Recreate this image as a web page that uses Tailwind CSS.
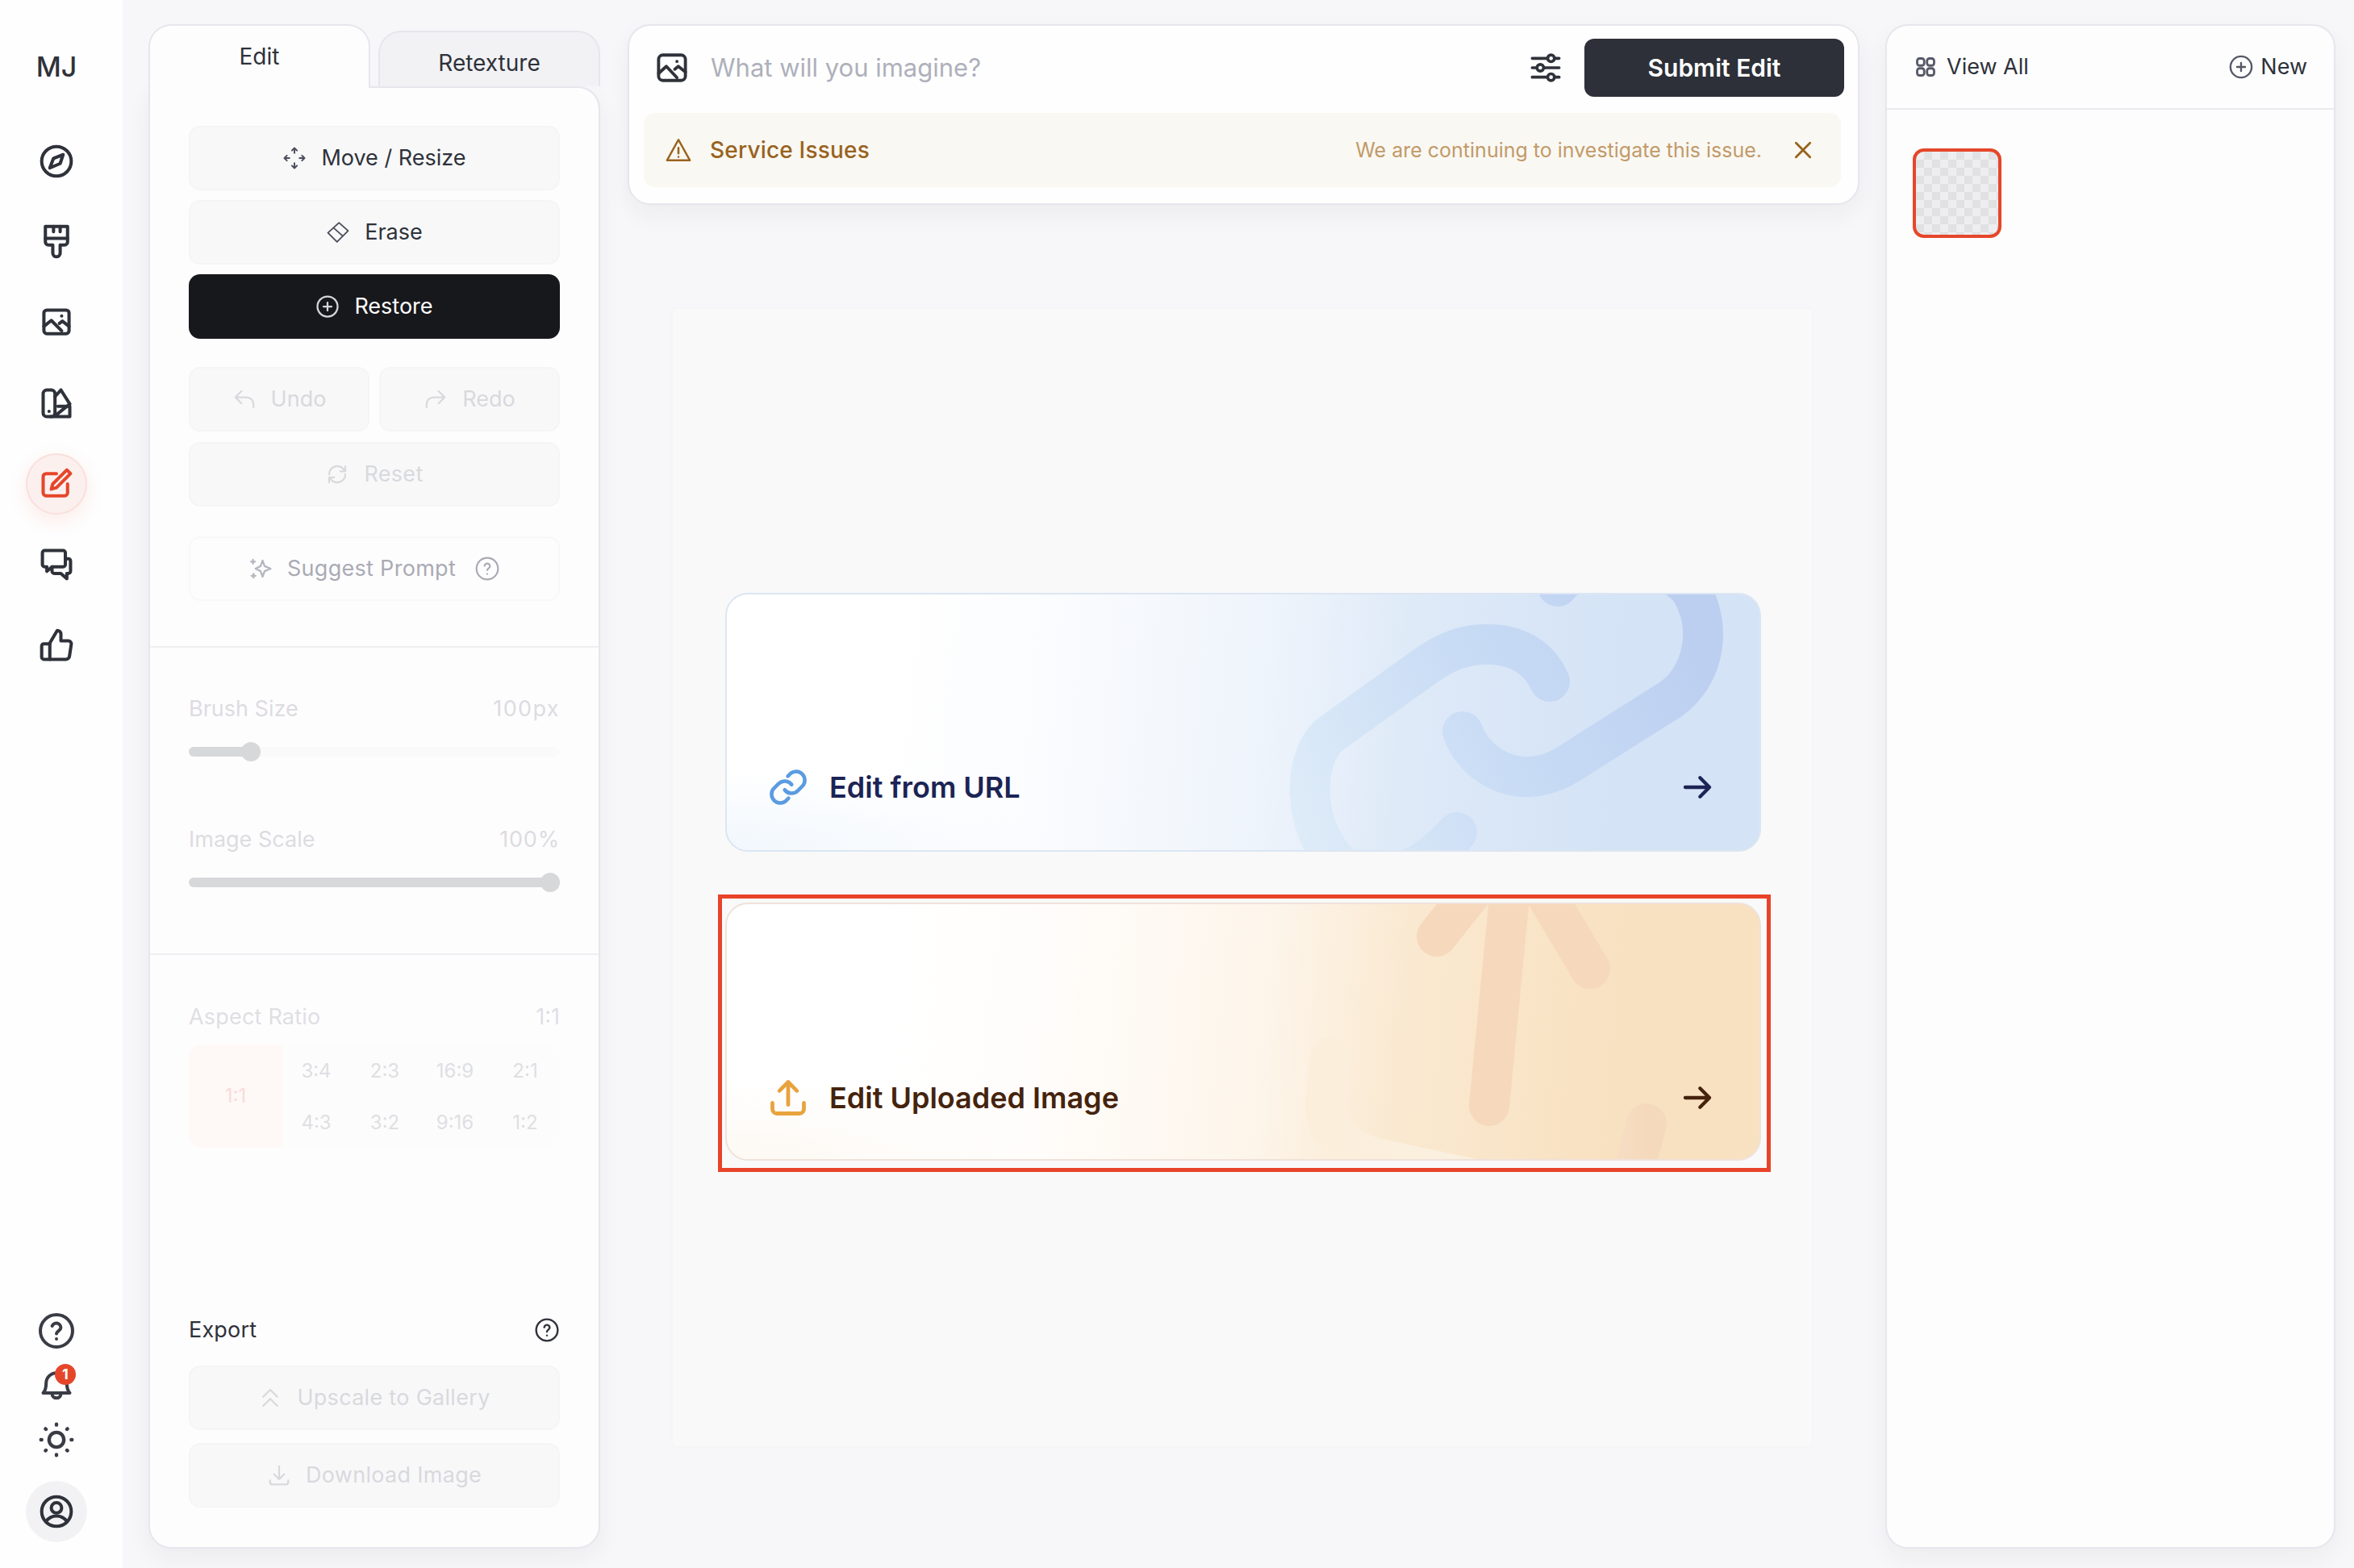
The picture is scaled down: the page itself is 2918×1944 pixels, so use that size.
<!DOCTYPE html>
<html lang="en">
<head>
  <meta charset="UTF-8">
  <title>Edit</title>
  <script src="https://cdn.jsdelivr.net/npm/@tailwindcss/browser@4"></script>
</head>
<body class="bg-[#f7f7f9] font-['Inter',sans-serif] text-[#2f323a] text-[27px] leading-[38px]">
  <div class="flex w-[2918px] h-[1944px] overflow-hidden">

    <!-- Icon rail -->
    <aside class="w-[152px] shrink-0 bg-[#fefefe] flex flex-col items-center pr-[12px]">
      <div class="mt-[63px] h-[40px] text-[34px] leading-[40px] font-medium text-[#2f323a]">MJ</div>
      <nav class="mt-[59px] flex flex-col items-center gap-[24px]">
        <a class="size-[76px] flex items-center justify-center rounded-full">
          <svg class="size-[44px]" viewBox="0 0 24 24" fill="none" stroke="currentColor" stroke-width="2.200" stroke-linejoin="round"><circle cx="12" cy="12" r="10"/><path d="M16.5 7.5l-2 6-7 3 2.500-6.500z"/></svg>
        </a>
        <a class="size-[76px] flex items-center justify-center rounded-full">
          <svg class="size-[44px]" viewBox="0 0 24 24" fill="none" stroke="currentColor" stroke-width="2.200" stroke-linejoin="round" stroke-linecap="round"><path d="M4.500 1.500h15v10.500a2 2 0 0 1-2 2h-3v5.500a2.500 2.500 0 0 1-5 0V14h-3a2 2 0 0 1-2-2z"/><path d="M4.500 9.500h15M10 1.500v3.500M14.500 1.500v3.500"/></svg>
        </a>
        <a class="size-[76px] flex items-center justify-center rounded-full">
          <svg class="size-[44px]" viewBox="0 0 24 24" fill="none" stroke="currentColor" stroke-width="2.200" stroke-linejoin="round" stroke-linecap="round"><rect x="3.500" y="3.500" width="17" height="16" rx="2"/><path d="M3.500 14.500l5-4 7 7M14 12.500l2-1.500 4.500 3.500M15.500 7.500h.01"/></svg>
        </a>
        <a class="size-[76px] flex items-center justify-center rounded-full">
          <svg class="size-[44px]" viewBox="0 0 24 24" fill="none" stroke="currentColor" stroke-width="2.200" stroke-linejoin="round" stroke-linecap="round"><rect x="3" y="3" width="8" height="18" rx="2.500"/><path d="M11 7.500L15 3l6 9.500-10 8M13 14h8v7H8"/><path d="M7 17.500h.01"/></svg>
        </a>
        <a class="size-[76px] flex items-center justify-center rounded-full bg-[#fcf0ef] border-2 border-[#fadfdb] text-[#e5462a] shadow-[0_8px_24px_rgba(229,70,42,0.1)]">
          <svg class="size-[44px]" viewBox="0 0 24 24" fill="none" stroke="currentColor" stroke-width="2.200" stroke-linejoin="round" stroke-linecap="round"><path d="M12 5H5a2 2 0 0 0-2 2v11a2 2 0 0 0 2 2h12.500a2 2 0 0 0 2-2v-6"/><path d="M19 2.500l2.500 2.500L12 14.500l-3.500 1 1-3.500z"/></svg>
        </a>
        <a class="size-[76px] flex items-center justify-center rounded-full">
          <svg class="size-[44px]" viewBox="0 0 24 24" fill="none" stroke="currentColor" stroke-width="2.200" stroke-linejoin="round" stroke-linecap="round"><path d="M4 2.500h12.500a1.500 1.500 0 0 1 1.500 1.500v8a1.500 1.500 0 0 1-1.500 1.500H9l-3.500 3v-3H4A1.500 1.500 0 0 1 2.500 12V4A1.500 1.500 0 0 1 4 2.500z"/><path d="M18 8h2a1.500 1.500 0 0 1 1.500 1.500v7A1.500 1.500 0 0 1 20 18h-1v3.500L15 18h-4.500A1.500 1.500 0 0 1 9 16.500v-3"/></svg>
        </a>
        <a class="size-[76px] flex items-center justify-center rounded-full">
          <svg class="size-[44px]" viewBox="0 0 24 24" fill="none" stroke="currentColor" stroke-width="2.200" stroke-linejoin="round" stroke-linecap="round"><path d="M7.500 21.500V10.500L12.500 2c1.500 0 2.500 1 2.500 2.500V9h5a2 2 0 0 1 2 2.300l-1.200 8A2.500 2.500 0 0 1 18.300 21.500z"/><path d="M7.500 11h-4A1.500 1.500 0 0 0 2 12.500v7.500a1.500 1.500 0 0 0 1.500 1.500h4"/></svg>
        </a>
      </nav>
      <div class="mt-auto mb-[32px] flex flex-col items-center">
        <svg class="size-[48px] text-[#3a3c45]" viewBox="0 0 24 24" fill="none" stroke="currentColor" stroke-width="2" stroke-linecap="round"><circle cx="12" cy="12" r="10"/><path d="M9.300 9a2.800 2.800 0 0 1 5.400 1c0 1.800-2.700 2.300-2.700 3.800M12 17h.01"/></svg>
        <div class="relative mt-[19px] size-[44px] text-[#3a3c45]">
          <svg class="size-[44px]" viewBox="0 0 24 24" fill="none" stroke="currentColor" stroke-width="2.200" stroke-linejoin="round"><path d="M3 18.500c1.500-1.500 2-3 2-6.500a7 7 0 0 1 14 0c0 3.500.5 5 2 6.500z"/><path d="M9 19a3 3 0 0 0 6 0"/></svg>
          <span class="absolute right-[-2px] top-[-2px] size-[26px] rounded-full bg-[#e5462a] text-white text-[18px] leading-[26px] font-bold text-center">1</span>
        </div>
        <svg class="mt-[26px] size-[44px] text-[#3a3c45]" viewBox="0 0 24 24" fill="none" stroke="currentColor" stroke-width="2.400" stroke-linecap="round"><circle cx="12" cy="12" r="5"/><path d="M12 1.500v.5M12 22v.5M1.500 12H2M22 12h.5M4.600 4.600l.3.3M19.100 19.100l.3.3M4.600 19.400l.3-.3M19.100 4.900l.3-.3"/></svg>
        <div class="mt-[29px] size-[76px] rounded-full bg-[#f2f2f4] flex items-center justify-center">
          <svg class="size-[44px]" viewBox="0 0 24 24" fill="none" stroke="currentColor" stroke-width="2.200" stroke-linecap="round"><circle cx="12" cy="12" r="10"/><circle cx="12" cy="9.500" r="3.500"/><path d="M5 18.500c2-2.500 4.500-3.500 7-3.500s5 1 7 3.500"/></svg>
        </div>
      </div>
    </aside>

    <!-- Tool panel -->
    <section class="ml-[32px] mt-[30px] mb-[24px] w-[560px] shrink-0 flex flex-col">
      <div class="flex gap-[10px] h-[79px] items-end relative z-10 text-[28px]">
        <div class="w-[275px] h-[79px] pt-[19px] text-center bg-[#fefdfe] border-2 border-b-0 border-[#e6e6ec] rounded-t-[28px]">Edit</div>
        <div class="w-[275px] h-[69px] pt-[19px] text-center bg-[#f2f2f5] border-2 border-b-0 border-[#e6e6ec] rounded-t-[28px] mb-[2px]">Retexture</div>
      </div>
      <div class="flex-1 -mt-[2px] bg-[#fefdfe] border-2 border-t-0 border-[#e6e6ec] rounded-b-[28px] rounded-tr-[28px] shadow-[0_12px_30px_rgba(40,40,60,0.05)] flex flex-col relative">
        <div class="absolute top-0 right-[-2px] w-[286px] h-[30px] border-t-2 border-r-2 border-[#e6e6ec] rounded-tr-[28px]"></div>
        <div class="px-[48px] pt-[49px] flex flex-col">
          <button class="h-[80px] flex items-center justify-center gap-[18px] rounded-[14px] bg-[#f8f8f9] border-2 border-[#f5f5f6]">
            <svg class="size-[30px] text-[#4c4f5b]" viewBox="0 0 24 24" fill="none" stroke="currentColor" stroke-width="1.600" stroke-linecap="round" stroke-linejoin="round"><path d="M12 7V2.500M9.500 4.500L12 2l2.500 2.500M12 17v4.500M9.500 19.500L12 22l2.500-2.500M7 12H2.500M4.500 9.500L2 12l2.500 2.500M17 12h4.500M19.500 9.500L22 12l-2.500 2.500"/></svg>
            Move / Resize
          </button>
          <button class="mt-[12px] h-[80px] flex items-center justify-center gap-[18px] rounded-[14px] bg-[#f8f8f9] border-2 border-[#f5f5f6]">
            <svg class="size-[30px] text-[#4c4f5b]" viewBox="0 0 24 24" fill="none" stroke="currentColor" stroke-width="1.500" stroke-linejoin="round"><path d="M2 12.500L13 2.500l9 8-11 11z"/><path d="M7.500 7.500l9 8"/></svg>
            Erase
          </button>
          <button class="mt-[12px] h-[80px] flex items-center justify-center gap-[18px] rounded-[14px] bg-[#17181c] text-white">
            <svg class="size-[30px] text-[#d5d6da]" viewBox="0 0 24 24" fill="none" stroke="currentColor" stroke-width="1.800" stroke-linecap="round"><circle cx="12" cy="12" r="10"/><path d="M12 8v8M8 12h8"/></svg>
            Restore
          </button>
          <div class="mt-[35px] flex gap-[12px] text-[#d9d9dd]">
            <button class="w-[224px] h-[80px] flex items-center justify-center gap-[18px] rounded-[14px] bg-[#f8f8f9] border-2 border-[#f5f5f6]">
              <svg class="size-[30px]" viewBox="0 0 24 24" fill="none" stroke="currentColor" stroke-width="1.800" stroke-linecap="round" stroke-linejoin="round"><path d="M9 4L3 10l6 6M3 10h11a7 7 0 0 1 7 7v3"/></svg>
              Undo
            </button>
            <button class="w-[224px] h-[80px] flex items-center justify-center gap-[18px] rounded-[14px] bg-[#f8f8f9] border-2 border-[#f5f5f6]">
              <svg class="size-[30px]" viewBox="0 0 24 24" fill="none" stroke="currentColor" stroke-width="1.800" stroke-linecap="round" stroke-linejoin="round"><path d="M15 4l6 6-6 6M21 10H10a7 7 0 0 0-7 7v3"/></svg>
              Redo
            </button>
          </div>
          <button class="mt-[13px] h-[80px] flex items-center justify-center gap-[18px] rounded-[14px] bg-[#f8f8f9] border-2 border-[#f5f5f6] text-[#d9d9dd] tracking-[0.3px]">
            <svg class="size-[30px]" viewBox="0 0 24 24" fill="none" stroke="currentColor" stroke-width="1.800" stroke-linecap="round" stroke-linejoin="round"><path d="M4 12a8 8 0 0 1 14-5.300L20 9M20 4v5h-5M20 12a8 8 0 0 1-14 5.300L4 15M4 20v-5h5"/></svg>
            Reset
          </button>
          <button class="mt-[37px] h-[80px] flex items-center justify-center gap-[18px] rounded-[14px] border-2 border-[#f8f8f9] text-[#a9abb4] tracking-[0.3px]">
            <svg class="size-[30px] text-[#b4b6bd]" viewBox="0 0 24 24" fill="none" stroke="currentColor" stroke-width="1.800" stroke-linejoin="round" stroke-linecap="round"><path d="M14 4l2 5.500L22 12l-6 2.500L14 20l-2-5.500L7 12l5-2.500zM4.500 3v4M2.500 5h4M5 17v4M3 19h4"/></svg>
            Suggest Prompt
            <svg class="size-[32px] ml-[5px]" viewBox="0 0 24 24" fill="none" stroke="currentColor" stroke-width="1.600" stroke-linecap="round"><circle cx="12" cy="12" r="10"/><path d="M9.500 9.500a2.500 2.500 0 0 1 5 .5c0 1.500-2.500 2-2.500 3.500M12 17h.01"/></svg>
          </button>
        </div>
        <div class="mt-[56px] border-t-2 border-[#eeeef2]"></div>

        <div class="px-[48px] text-[#dcdce0]">
          <div class="mt-[57px] flex justify-between"><span>Brush Size</span><span class="tracking-[1.400px]">100px</span></div>
          <div class="mt-[28px] h-[12px] rounded-full bg-[#fafafa] relative">
            <div class="h-[12px] w-[77px] rounded-l-full bg-[#d7d8da]"></div>
            <div class="absolute left-[65px] top-[-6px] size-[24px] rounded-full bg-[#d7d8da]"></div>
          </div>
          <div class="mt-[84px] flex justify-between"><span>Image Scale</span><span class="tracking-[0.800px]">100%</span></div>
          <div class="mt-[28px] h-[12px] rounded-full bg-[#d7d8da] relative">
            <div class="absolute right-0 top-[-6px] size-[24px] rounded-full bg-[#d7d8da]"></div>
          </div>
        </div>
        <div class="mt-[82px] border-t-2 border-[#eeeef2]"></div>

        <div class="px-[48px] text-[#dfdfe3]">
          <div class="mt-[58px] flex justify-between"><span class="tracking-[0.200px]">Aspect Ratio</span><span>1:1</span></div>
          <div class="mt-[15px] grid grid-cols-[116px_84px_86px_88px_86px] grid-rows-[66px_62px] text-[24px] text-center">
            <div class="row-span-2 rounded-l-[16px] bg-[#fef8f7] text-[#f9dcd7] flex items-center justify-center">1:1</div>
            <div class="bg-[#fcfcfc] flex items-center justify-center">3:4</div>
            <div class="bg-[#fcfcfc] flex items-center justify-center">2:3</div>
            <div class="bg-[#fcfcfc] flex items-center justify-center">16:9</div>
            <div class="bg-[#fcfcfc] rounded-tr-[16px] flex items-center justify-center">2:1</div>
            <div class="bg-[#fcfcfc] flex items-center justify-center">4:3</div>
            <div class="bg-[#fcfcfc] flex items-center justify-center">3:2</div>
            <div class="bg-[#fcfcfc] flex items-center justify-center">9:16</div>
            <div class="bg-[#fcfcfc] rounded-br-[16px] flex items-center justify-center">1:2</div>
          </div>
        </div>

        <div class="mt-auto px-[48px] pb-[49px]">
          <div class="flex justify-between items-center translate-y-[1px]">
            <span class="tracking-[0.200px]">Export</span>
            <svg class="size-[32px]" viewBox="0 0 24 24" fill="none" stroke="currentColor" stroke-width="1.800" stroke-linecap="round"><circle cx="12" cy="12" r="10"/><path d="M9.500 9.500a2.500 2.500 0 0 1 5 .5c0 1.500-2.500 2-2.500 3.500M12 17h.01"/></svg>
          </div>
          <button class="mt-[26px] w-full h-[80px] flex items-center justify-center gap-[18px] rounded-[14px] bg-[#f8f8f9] border-2 border-[#f5f5f6] text-[#d9d9dd] tracking-[0.300px]">
            <svg class="size-[30px]" viewBox="0 0 24 24" fill="none" stroke="currentColor" stroke-width="1.800" stroke-linecap="round" stroke-linejoin="round"><path d="M5 11l7-7 7 7M5 20l7-7 7 7"/></svg>
            Upscale to Gallery
          </button>
          <button class="mt-[16px] w-full h-[80px] flex items-center justify-center gap-[18px] rounded-[14px] bg-[#f8f8f9] border-2 border-[#f5f5f6] text-[#d9d9dd] tracking-[0.300px]">
            <svg class="size-[30px]" viewBox="0 0 24 24" fill="none" stroke="currentColor" stroke-width="1.800" stroke-linecap="round" stroke-linejoin="round"><path d="M12 3v13M7 11l5 5 5-5M3 17v2a2 2 0 0 0 2 2h14a2 2 0 0 0 2-2v-2"/></svg>
            Download Image
          </button>
        </div>
      </div>
    </section>

    <!-- Prompt bar and canvas -->
    <main class="ml-[34px] w-[1527px] shrink-0 mt-[30px]">
      <div class="h-[224px] rounded-[28px] bg-[#fefefe] border-2 border-[#e6e6ec] shadow-[0_12px_30px_rgba(40,40,60,0.05)] pt-[16px]">
        <div class="flex items-center h-[72px] pl-[32px] pr-[17px]">
          <svg class="size-[42px] shrink-0" viewBox="0 0 24 24" fill="none" stroke="currentColor" stroke-width="2.200" stroke-linejoin="round" stroke-linecap="round"><rect x="2.500" y="3" width="19" height="18" rx="3"/><path d="M2.500 16l5.500-5 7.500 8M14 13l2.500-2 5 4M15.500 7.500h.01"/></svg>
          <span class="ml-[27px] text-[31px] text-[#aeb0bb]">What will you imagine?</span>
          <svg class="ml-auto size-[40px]" viewBox="0 0 24 24" fill="none" stroke="currentColor" stroke-width="2.200" stroke-linecap="round"><path d="M2 5h11M19 5h3M2 12h3M11 12h11M2 19h11M19 19h3"/><circle cx="16" cy="5" r="2.500"/><circle cx="8" cy="12" r="2.500"/><circle cx="16" cy="19" r="2.500"/></svg>
          <button class="ml-[28px] w-[322px] h-[72px] rounded-[12px] bg-[#2d3038] text-white text-[30px] font-semibold">Submit Edit</button>
        </div>
        <div class="mt-[20px] ml-[18px] mr-[21px] h-[92px] rounded-[14px] bg-[#faf8f3] flex items-center pl-[26px] pr-[34px] text-[#98631e]">
          <svg class="size-[34px]" viewBox="0 0 24 24" fill="none" stroke="currentColor" stroke-width="1.800" stroke-linejoin="round" stroke-linecap="round"><path d="M12 3L2 21h20zM12 10v5M12 18h.01"/></svg>
          <span class="ml-[22px] font-medium text-[28px] tracking-[0.200px]">Service Issues</span>
          <span class="ml-auto text-[25px] text-[#c29a69]">We are continuing to investigate this issue.</span>
          <svg class="ml-[38px] size-[26px]" viewBox="0 0 24 24" fill="none" stroke="currentColor" stroke-width="2.600" stroke-linecap="round"><path d="M4 4l16 16M20 4L4 20"/></svg>
        </div>
      </div>

      <div class="mt-[127px] ml-[54px] mr-[57px] h-[1414px] bg-[#f9f9fa] border-2 border-[#f5f5f7] rounded-[6px] pt-[352px] pl-[65px] pr-[63px] flex flex-col gap-[63px]">
        <a class="relative block h-[321px] shrink-0 rounded-[28px] border-2 border-[#dce6f2] bg-[radial-gradient(ellipse_at_0%_100%,#f1f7fd_0%,transparent_22%),linear-gradient(95deg,#fff_15%,#fbfcfe_30%,#eef4fb_52%,#dfeaf8_65%,#d4e3f6_85%)]">
          <div class="absolute inset-0 overflow-hidden rounded-[26px]">
            <svg class="absolute left-0 top-0" width="1286" height="321" fill="none" stroke-width="50" stroke-linecap="round" stroke-linejoin="round">
              <defs>
                <linearGradient id="link" gradientUnits="userSpaceOnUse" x1="700" y1="300" x2="1200" y2="60">
                  <stop offset="0" stop-color="#dcebf8" stop-opacity="0.8"/>
                  <stop offset="0.5" stop-color="#c9dcf5"/>
                  <stop offset="1" stop-color="#bccff0"/>
                </linearGradient>
              </defs>
              <path stroke="url(#link)" d="M1020 108C1005 75 975 60 935 62C905 64 885 75 860 93L750 172C712 200 712 290 760 335C800 370 860 345 905 295"/>
              <path stroke="url(#link)" d="M912 170C925 205 960 228 996 226C1030 224 1050 205 1075 190L1170 130C1212 100 1222 40 1195 -5C1160 -50 1060 -50 1030 -10"/>
            </svg>
          </div>
          <div class="absolute left-[50px] bottom-[52px] right-[57px] flex items-center">
            <svg class="size-[52px] text-[#5b9be0]" viewBox="0 0 24 24" fill="none" stroke="currentColor" stroke-width="2.100" stroke-linecap="round"><path d="M10 13.500a5 5 0 0 0 7.500.5l3-3a5 5 0 0 0-7-7l-1.700 1.700"/><path d="M14 10.500a5 5 0 0 0-7.500-.5l-3 3a5 5 0 0 0 7 7l1.700-1.700"/></svg>
            <span class="ml-[25px] text-[36px] leading-[50px] font-semibold text-[#1c2455]">Edit from URL</span>
            <svg class="ml-auto size-[40px] text-[#1c2455]" viewBox="0 0 24 24" fill="none" stroke="currentColor" stroke-width="2.600" stroke-linecap="round" stroke-linejoin="round"><path d="M3 12h18M14 5l7 7-7 7"/></svg>
          </div>
        </a>

        <a class="relative block h-[320px] shrink-0 rounded-[28px] border-2 border-[#efe2da] bg-[radial-gradient(ellipse_at_0%_100%,#fdf9f3_0%,transparent_22%),linear-gradient(95deg,#fff_15%,#fffdfb_30%,#fdf5ea_52%,#fae9d1_65%,#f8e1c1_85%)]">
          <div class="absolute inset-0 overflow-hidden rounded-[26px]">
            <svg class="absolute left-0 top-0" width="1286" height="320" fill="none" stroke-width="50" stroke-linecap="round" stroke-linejoin="round">
              <defs>
                <linearGradient id="up" gradientUnits="userSpaceOnUse" x1="740" y1="0" x2="1140" y2="0">
                  <stop offset="0" stop-color="#fbeedb"/>
                  <stop offset="0.5" stop-color="#fbf0e0"/>
                  <stop offset="1" stop-color="#f5d9bd"/>
                </linearGradient>
              </defs>
              <path stroke="#f6d9bd" d="M945 250L975 -60M880 40L975 -80L1070 80"/>
              <path stroke="url(#up)" d="M748 190L742 250C742 280 760 300 800 314L960 348L1120 350L1140 272"/>
            </svg>
          </div>
          <div class="absolute left-[50px] bottom-[50px] right-[57px] flex items-center">
            <svg class="size-[52px] text-[#e8a33d]" viewBox="0 0 24 24" fill="none" stroke="currentColor" stroke-width="2.200" stroke-linecap="round" stroke-linejoin="round"><path d="M12 16V3M7 8l5-5 5 5M3 15v3.500A2.500 2.500 0 0 0 5.500 21h13a2.500 2.500 0 0 0 2.500-2.500V15"/></svg>
            <span class="ml-[25px] text-[36px] leading-[50px] font-semibold text-[#45230d]">Edit Uploaded Image</span>
            <svg class="ml-auto size-[40px] text-[#45230d]" viewBox="0 0 24 24" fill="none" stroke="currentColor" stroke-width="2.600" stroke-linecap="round" stroke-linejoin="round"><path d="M3 12h18M14 5l7 7-7 7"/></svg>
          </div>
          <!-- annotation frame over the card -->
          <div class="absolute left-[-11px] right-[-14px] top-[-12px] bottom-[-16px] border-[5px] border-[#e8432a] pointer-events-none"></div>
        </a>
      </div>
    </main>

    <!-- Versions panel -->
    <aside class="ml-[32px] mt-[30px] mb-[24px] w-[558px] shrink-0 rounded-[28px] bg-[#fdfdfe] border-2 border-[#e6e6ec] shadow-[0_12px_30px_rgba(40,40,60,0.05)]">
      <div class="h-[104px] border-b-2 border-[#eaeaef] flex items-center justify-between pl-[34px] pr-[33px]">
        <div class="flex items-center gap-[12px]">
          <svg class="size-[28px] text-[#565966]" viewBox="0 0 24 24" fill="none" stroke="currentColor" stroke-width="2.400"><rect x="3" y="3" width="7.500" height="7.500" rx="2.500"/><rect x="13.500" y="3" width="7.500" height="7.500" rx="2.500"/><rect x="3" y="13.500" width="7.500" height="7.500" rx="2.500"/><rect x="13.500" y="13.500" width="7.500" height="7.500" rx="2.500"/></svg>
          View All
        </div>
        <div class="flex items-center gap-[9px]">
          <svg class="size-[30px] text-[#565966]" viewBox="0 0 24 24" fill="none" stroke="currentColor" stroke-width="1.900" stroke-linecap="round"><circle cx="12" cy="12" r="10.500"/><path d="M12 8v8M8 12h8"/></svg>
          New
        </div>
      </div>
      <div class="pt-[48px] pl-[32px]">
        <div class="w-[110px] h-[111px] rounded-[14px] border-[4px] border-[#e5462a] bg-[repeating-conic-gradient(#e1e1e4_0%_25%,#eeeef0_0%_50%)] bg-size-[20px_20px]"></div>
      </div>
    </aside>
  </div>
</body>
</html>
